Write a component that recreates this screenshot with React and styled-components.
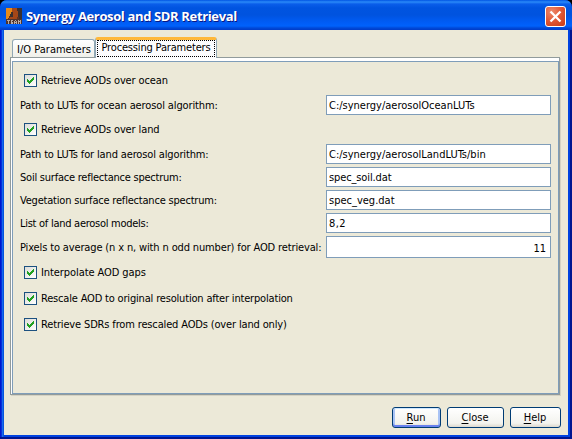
import React from 'react';
import styled, { createGlobalStyle } from 'styled-components';

const Global = createGlobalStyle`
  *, *::before, *::after { box-sizing: border-box; }
  body { margin: 0; background: #000; overflow: hidden; }
`;

const Frame = styled.main`
  width: 572px;
  height: 439px;
  display: flex;
  flex-direction: column;
  border-radius: 7px 7px 0 0;
  overflow: hidden;
  padding: 0 4px 4px;
  background: linear-gradient(90deg, #0019cf 0, #0019cf 1px, #0831d9 1px, #0831d9 2px, #166aee 2px, #166aee 3px, #0855dd 3px, #0855dd 4px, #0042e0 4px, #0042e0 570px, #001590 570px);
  box-shadow: inset 0 -2px #001590;
  font-family: 'DejaVu Sans Condensed', 'DejaVu Sans', sans-serif;
  font-stretch: condensed;
  font-size: 11px;
  line-height: 14px;
  color: #000;
`;

const TitleBar = styled.header`
  height: 30px;
  flex: none;
  margin: 0 -4px;
  padding: 2px 6px 0;
  display: flex;
  align-items: center;
  background: linear-gradient(#0054e3 0, #2a8af8 2px, #0a5eea 4px, #0054e0 8px, #0053df 15px, #005cf5 22px, #0062fc 26px, #0049d8 28px, #003bc8 30px);
`;

const Title = styled.h1`
  margin: 0 auto 0 4px;
  font: bold 13px/18px 'Open Sans', sans-serif;
  letter-spacing: ${(p) => p.$track}px;
  color: #fff;
  text-shadow: 1px 1px #0a1883;
  white-space: nowrap;
`;

const CloseBox = styled.button`
  width: 21px;
  height: 21px;
  padding: 0;
  border: 1px solid #fff;
  border-radius: 3px;
  background: radial-gradient(circle at 30% 25%, #ec8a6c 0, #e35a38 45%, #c83a13 100%);
  display: flex;
`;

const Client = styled.section`
  flex: 1;
  padding: 7px 8px 7px 6px;
  background: #ece9d8;
  display: flex;
  flex-direction: column;
`;

const Tabs = styled.nav`
  height: 21px;
  flex: none;
  margin: 0 0 -1px 2px;
  display: flex;
  align-items: flex-end;
`;

const Tab = styled.button`
  font: inherit;
  white-space: nowrap;
  width: ${(p) => (p.$active ? 122 : 83)}px;
  height: ${(p) => (p.$active ? 21 : 18)}px;
  margin-bottom: ${(p) => (p.$active ? 0 : 1)}px;
  z-index: ${(p) => (p.$active ? 1 : 0)};
  padding: 0;
  border: 1px solid #91a7b4;
  border-bottom: 0;
  border-top: ${(p) => (p.$active ? '3px solid #ffb83a' : '1px solid #91a7b4')};
  border-radius: 3px 3px 0 0;
  background: ${(p) => (p.$active ? '#fcfcfe' : 'linear-gradient(#fff, #f0f0ea)')};
  color: #000;
  display: flex;
  align-items: stretch;
`;

const TabFace = styled.span`
  flex: 1;
  display: flex;
  justify-content: center;
  align-items: center;
  border: 1px ${(p) => (p.$focus ? 'dotted #000' : 'solid transparent')};
  margin: ${(p) => (p.$focus ? '0 1px 1px' : '2px 0 0 1px')};
  padding-bottom: ${(p) => (p.$focus ? 1 : 0)}px;
`;

const Pane = styled.div`
  height: 338px;
  flex: none;
  border: 1px solid #919b9c;
  background: #fff;
  padding: 3px 0 0 1px;
  box-shadow: 1px 1px #d5d2c3;
`;

const Form = styled.div`
  height: 100%;
  border: 1px solid #7f9db9;
  background: #ece9d8;
  padding: 5px 7px 0;
  display: grid;
  grid-template-columns: 100%;
  grid-template-rows: 27px 22px 27px 22px 24px 22px 24px 24px 27px 25px 27px;
`;

const Row = styled.label`
  display: flex;
  align-items: center;
  padding-left: ${(p) => (p.$check ? 4 : 0)}px;
`;

const Text = styled.span`
  white-space: nowrap;
  letter-spacing: ${(p) => p.$track || 0}px;
`;

const LabelText = styled(Text)`
  padding-top: 2px;
`;

const CheckText = styled(Text)`
  margin-left: 4px;
  padding-top: 1px;
`;

const Box = styled.span`
  width: 13px;
  height: 13px;
  flex: none;
  border: 1px solid #1c5180;
  background: linear-gradient(135deg, #dcdcd7, #fff);
  display: flex;
`;

const Field = styled.input`
  width: 225px;
  height: ${(p) => (p.$number ? 22 : 20)}px;
  margin-left: auto;
  flex: none;
  padding: ${(p) => (p.$number ? '2px 4px 0 2px' : '1px 3px 0 2px')};
  border: 1px solid #7f9db9;
  border-radius: 0;
  outline: 0;
  background: #fff;
  color: #000;
  font: inherit;
  letter-spacing: ${(p) => p.$track || 0}px;
  text-align: ${(p) => (p.$number ? 'right' : 'left')};
`;

const Footer = styled.footer`
  margin-top: auto;
  margin-right: -1px;
  display: flex;
  justify-content: flex-end;
  gap: 6px;
`;

const Button = styled.button`
  width: ${(p) => p.$w}px;
  height: 21px;
  padding: 1px 1px 0 0;
  font: inherit;
  color: #000;
  border: 1px solid #003c74;
  border-radius: 3px;
  background: linear-gradient(#fff, #f3f3ee 80%, #dcd8cd);
  box-shadow: ${(p) => (p.$default ? 'inset 0 1px #cee7ff, inset 0 -2px #6982ee, inset 2px 0 #a9c3f5, inset -2px 0 #a9c3f5' : 'none')};
`;

const Key = styled.span`
  text-decoration: underline;
  text-underline-offset: 2px;
`;

const BeamIcon = () => (
  <svg width="16" height="16" viewBox="0 0 16 16" shapeRendering="crispEdges">
    <path fill="#623420" d="M0 0h16v16H0z" />
    <path fill="#e88a18" d="M0 0h6v3L4 7 2 11H0z" />
    <path fill="#a44718" d="M6 0h5l2 5-2 6H3l3-6z" />
    <path fill="#3a302e" d="M11 0h5v11h-3l-1-5zM5 4h2v5H4z" />
    <path fill="#50342c" d="M0 11h16v5H0z" />
    <path d="M1 12.5h3M2.5 13v3M5 12v4M5 12.5h2M5 14.500h2M5 15.500h2M8.500 13v3M10.500 13v3M9 12.500h1M9 14.500h1M12.500 12v4M14.500 12v4M13 13.500h1" stroke="#b9aaa2" fill="none" />
  </svg>
);

const CrossIcon = () => (
  <svg width="19" height="19" viewBox="0 0 19 19">
    <path d="M4.500 4.500l10 10M14.500 4.500l-10 10" stroke="#fff" strokeWidth="2.300" />
  </svg>
);

const Check = () => (
  <Box>
    <svg width="11" height="11" viewBox="0 0 11 11" shapeRendering="crispEdges">
      <path fill="#21a121" d="M2 4h1v1h1v1h1V5h1V4h1V3h1V2h1v3H8v1H7v1H6v1H5v1H4V8H3V7H2z" />
    </svg>
  </Box>
);

const rows = [
  { check: true, label: 'Retrieve AODs over ocean', track: -0.12 },
  { label: 'Path to LUTs for ocean aerosol algorithm:', value: 'C:/synergy/aerosolOceanLUTs', track: -0.12, valueTrack: 0 },
  { check: true, label: 'Retrieve AODs over land', track: -0.12 },
  { label: 'Path to LUTs for land aerosol algorithm:', value: 'C:/synergy/aerosolLandLUTs/bin', track: -0.14, valueTrack: 0 },
  { label: 'Soil surface reflectance spectrum:', value: 'spec_soil.dat', track: -0.23, valueTrack: -0.12 },
  { label: 'Vegetation surface reflectance spectrum:', value: 'spec_veg.dat', track: -0.2, valueTrack: 0 },
  { label: 'List of land aerosol models:', value: '8,2', track: -0.27, valueTrack: 0.4 },
  { label: 'Pixels to average (n x n, with n odd number) for AOD retrieval:', value: '11', number: true, track: -0.14 },
  { check: true, label: 'Interpolate AOD gaps', track: -0.08 },
  { check: true, label: 'Rescale AOD to original resolution after interpolation', track: -0.18 },
  { check: true, label: 'Retrieve SDRs from rescaled AODs (over land only)', track: -0.15 },
];

export default function App() {
  return (
    <>
      <Global />
      <Frame>
        <TitleBar>
          <BeamIcon />
          <Title $track={-0.36}>Synergy Aerosol and SDR Retrieval</Title>
          <CloseBox aria-label="Close window"><CrossIcon /></CloseBox>
        </TitleBar>
        <Client>
          <Tabs>
            <Tab><TabFace><Text>I/O Parameters</Text></TabFace></Tab>
            <Tab $active><TabFace $focus><Text $track={-0.17}>Processing Parameters</Text></TabFace></Tab>
          </Tabs>
          <Pane>
            <Form>
              {rows.map((r) =>
                r.check ? (
                  <Row key={r.label} $check><Check /><CheckText $track={r.track}>{r.label}</CheckText></Row>
                ) : (
                  <Row key={r.label}>
                    <LabelText $track={r.track}>{r.label}</LabelText>
                    <Field $number={r.number} $track={r.valueTrack} defaultValue={r.value} />
                  </Row>
                )
              )}
            </Form>
          </Pane>
          <Footer>
            <Button $w={49} $default><Key>R</Key>un</Button>
            <Button $w={57}><Key>C</Key>lose</Button>
            <Button $w={51}><Key>H</Key>elp</Button>
          </Footer>
        </Client>
      </Frame>
    </>
  );
}
